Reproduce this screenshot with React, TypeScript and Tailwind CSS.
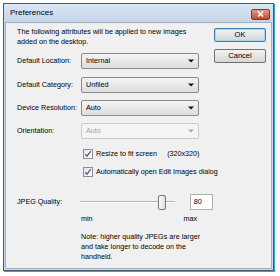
import React from "react";

const font = { fontFamily: '"Liberation Sans", Arial, sans-serif' };

function Select({ value, disabled }: { value: string; disabled?: boolean }) {
  return (
    <div
      className={
        "flex h-[16px] w-[118px] items-center justify-between rounded-[2px] border pl-[4px] pr-[4px] " +
        (disabled
          ? "border-[#cacaca] bg-[#f4f4f4] text-[#a3a3a3]"
          : "border-[#8a8a8a] bg-gradient-to-b from-[#f4f4f4] to-[#dcdcdc] text-black")
      }
    >
      <span>{value}</span>
      <svg width="6" height="4" viewBox="0 0 6 4">
        <path d="M0 0.5h6L3 3.5z" fill={disabled ? "#a8a8a8" : "#111"} />
      </svg>
    </div>
  );
}

function Check({ label, extra }: { label: string; extra?: string }) {
  return (
    <div className="flex h-[10px] items-center whitespace-nowrap">
      <div className="flex h-[10px] w-[10px] shrink-0 items-center justify-center border border-[#8e8f8f] bg-gradient-to-br from-[#e6e6e6] to-[#ffffff]">
        <svg width="8" height="8" viewBox="0 0 8 8">
          <path d="M1.2 4.2l1.8 2L6.8 1.2" stroke="#4a5f97" strokeWidth="1.3" fill="none" />
        </svg>
      </div>
      <span className="ml-[3px]">{label}</span>
      {extra && <span className="ml-[10px]">{extra}</span>}
    </div>
  );
}

function Button({ children, primary }: { children: React.ReactNode; primary?: boolean }) {
  return (
    <div
      className={
        "flex h-[14px] w-[52px] items-center justify-center rounded-[2px] border bg-gradient-to-b from-[#f2f2f2] to-[#d6d6d6] text-[7.5px] " +
        (primary ? "border-[#3c7fb1] shadow-[inset_0_0_0_1px_#a8d8f0]" : "border-[#707070]")
      }
    >
      {children}
    </div>
  );
}

export default function App() {
  return (
    <div className="h-[276px] w-[280px] bg-white pl-[3px] pt-[3px]" style={font}>
      <div className="flex h-[268px] w-[271px] flex-col border border-[#4f5a66] bg-[#cbd9eb] shadow-[1px_1px_0_#35a3d4]">
        {/* title bar */}
        <div className="flex h-[18px] items-center justify-between bg-gradient-to-b from-[#dae5f2] to-[#c5d5e9] pl-[6px] pr-[3px]">
          <span className="text-[8px] text-black">Preferences</span>
          <div className="mt-[2px] flex h-[11px] w-[19px] items-center justify-center rounded-[2px] border border-[#7a3a32] bg-gradient-to-b from-[#e49a89] to-[#c5442f]">
            <svg width="7" height="6" viewBox="0 0 7 6">
              <path d="M1 0.5l5 5M6 0.5l-5 5" stroke="#fff" strokeWidth="1.5" />
            </svg>
          </div>
        </div>
        {/* client area */}
        <div className="mx-[1px] mb-[1px] flex flex-1 border border-[#9fb0c4] bg-[#f0f0f0] pl-[11px] pt-[4px] text-[7.2px] leading-[10px] text-black">
          <div className="w-[196px]">
            <p className="whitespace-nowrap">
              The following attributes will be applied to new images
              <br />
              added on the desktop.
            </p>
            <div className="mt-[6px] flex items-center">
              <span className="w-[64px] whitespace-nowrap">Default Location:</span>
              <Select value="Internal" />
            </div>
            <div className="mt-[8px] flex items-center">
              <span className="w-[64px] whitespace-nowrap">Default Category:</span>
              <Select value="Unfiled" />
            </div>
            <div className="mt-[7px] flex items-center">
              <span className="w-[64px] whitespace-nowrap">Device Resolution:</span>
              <Select value="Auto" />
            </div>
            <div className="mt-[7px] flex items-center">
              <span className="w-[64px]">Orientation:</span>
              <Select value="Auto" disabled />
            </div>
            <div className="ml-[66px] mt-[10px]">
              <Check label="Resize to fit screen" extra="(320x320)" />
              <div className="mt-[8px]">
                <Check label="Automatically open Edit Images dialog" />
              </div>
            </div>
            <div className="mt-[17px] flex h-[16px] items-center">
              <span className="w-[69px] whitespace-nowrap">JPEG Quality:</span>
              <div className="relative h-[16px] w-[105px]">
                <div className="absolute left-0 right-0 top-[7px] h-[2px] border-t border-b border-t-[#b5b5b5] border-b-[#ffffff] bg-[#e3e3e3]" />
                <div className="absolute left-[78px] top-[1px] h-[15px] w-[8px] rounded-[2px] border border-[#787878] bg-gradient-to-r from-[#fafafa] to-[#dedede]" />
              </div>
              <div className="ml-[15px] flex h-[16px] w-[25px] items-center border border-[#abadb3] bg-white pl-[3px]">
                80
              </div>
            </div>
            <div className="ml-[64px] mt-[4px] flex w-[116px] justify-between">
              <span>min</span>
              <span>max</span>
            </div>
            <p className="ml-[64px] mt-[8px] whitespace-nowrap">
              Note: higher quality JPEGs are larger
              <br />
              and take longer to decode on the
              <br />
              handheld.
            </p>
          </div>
          <div className="ml-[1px] mt-[1px] flex flex-col gap-[7px]">
            <Button primary>OK</Button>
            <Button>Cancel</Button>
          </div>
        </div>
      </div>
    </div>
  );
}
